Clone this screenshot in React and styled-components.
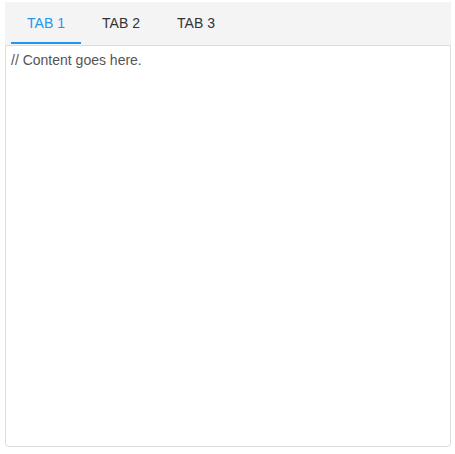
import React, { useState } from 'react';
import styled, { createGlobalStyle } from 'styled-components';

const GlobalStyle = createGlobalStyle`
  body {
    margin: 0;
    font-family: "Liberation Sans", Arial, sans-serif;
    background: #fff;
  }
`;

const tabs = ["TAB 1", "TAB 2", "TAB 3"];

const App = () => {
  const [active, setActive] = useState(0);

  return (
    <>
      <GlobalStyle />
      <Wrapper>
        <TabBar>
          {tabs.map((tab, index) => (
            <Tab key={index} active={index === active} onClick={() => setActive(index)}>
              {tab}
            </Tab>
          ))}
        </TabBar>
        <Panel>// Content goes here.</Panel>
      </Wrapper>
    </>
  );
};

export default App;

const Wrapper = styled.div`
  display: flex;
  flex-direction: column;
  width: 446px;
  height: 445px;
  margin: 2px 0 0 5px;
`;

const TabBar = styled.div`
  display: flex;
  gap: 5px;
  height: 43px;
  padding: 0 6px;
  background-color: #f4f4f4;
  box-sizing: border-box;
`;

const Tab = styled.div`
  display: flex;
  justify-content: center;
  align-items: center;
  width: 70px;
  font-size: 14px;
  color: ${({ active }) => (active ? "#2196f3" : "#333")};
  border-bottom: 2px solid ${({ active }) => (active ? "#2196f3" : "transparent")};
  box-sizing: border-box;
  padding-top: 2px;
  margin-bottom: 1px;
  cursor: pointer;
`;

const Panel = styled.div`
  flex: 1;
  border: 1px solid #ddd;
  border-radius: 0 0 4px 4px;
  padding: 6px 5px;
  font-size: 14px;
  color: #555;
`;
